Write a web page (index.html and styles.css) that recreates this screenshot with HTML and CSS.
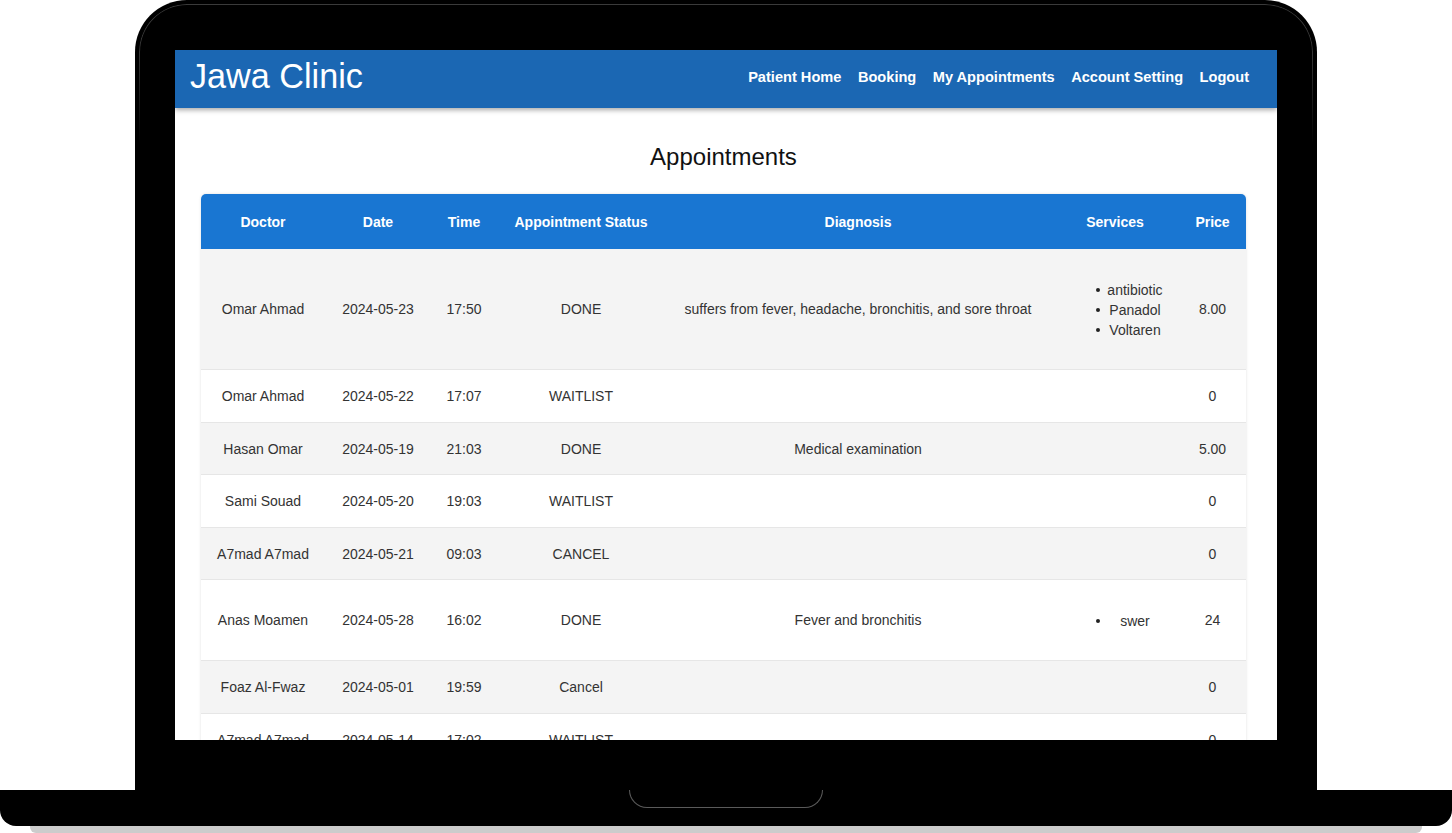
FILE: index.html
```html
<!DOCTYPE html>
<html lang="en">
<head>
<meta charset="utf-8">
<title>Jawa Clinic - My Appointments</title>
<link rel="stylesheet" href="styles.css">
</head>
<body>
<div class="device">
  <div class="lid">
    <div class="screen">
      <header class="navbar">
        <div class="brand">Jawa Clinic</div>
        <nav class="nav-links">
          <a href="#">Patient Home</a>
          <a href="#">Booking</a>
          <a href="#">My Appointments</a>
          <a href="#">Account Setting</a>
          <a href="#">Logout</a>
        </nav>
      </header>
      <main class="content">
        <h2 class="page-title">Appointments</h2>
        <div class="table-card">
          <table class="appt-table">
            <colgroup>
              <col class="c-doctor"><col class="c-date"><col class="c-time"><col class="c-status"><col class="c-diag"><col class="c-serv"><col class="c-price">
            </colgroup>
            <thead>
              <tr><th>Doctor</th><th>Date</th><th>Time</th><th>Appointment Status</th><th>Diagnosis</th><th>Services</th><th>Price</th></tr>
            </thead>
            <tbody>
              <tr><td>Omar Ahmad</td><td>2024-05-23</td><td>17:50</td><td>DONE</td><td>suffers from fever, headache, bronchitis, and sore throat</td><td><ul class="services"><li>antibiotic</li><li>Panadol</li><li>Voltaren</li></ul></td><td>8.00</td></tr>
              <tr><td>Omar Ahmad</td><td>2024-05-22</td><td>17:07</td><td>WAITLIST</td><td></td><td></td><td>0</td></tr>
              <tr><td>Hasan Omar</td><td>2024-05-19</td><td>21:03</td><td>DONE</td><td>Medical examination</td><td></td><td>5.00</td></tr>
              <tr><td>Sami Souad</td><td>2024-05-20</td><td>19:03</td><td>WAITLIST</td><td></td><td></td><td>0</td></tr>
              <tr><td>A7mad A7mad</td><td>2024-05-21</td><td>09:03</td><td>CANCEL</td><td></td><td></td><td>0</td></tr>
              <tr><td>Anas Moamen</td><td>2024-05-28</td><td>16:02</td><td>DONE</td><td>Fever and bronchitis</td><td><ul class="services"><li>swer</li></ul></td><td>24</td></tr>
              <tr><td>Foaz Al-Fwaz</td><td>2024-05-01</td><td>19:59</td><td>Cancel</td><td></td><td></td><td>0</td></tr>
              <tr><td>A7mad A7mad</td><td>2024-05-14</td><td>17:02</td><td>WAITLIST</td><td></td><td></td><td>0</td></tr>
              <tr><td>Sami Souad</td><td>2024-05-12</td><td>11:30</td><td>DONE</td><td></td><td></td><td>0</td></tr>
            </tbody>
          </table>
        </div>
      </main>
    </div>
  </div>
  <div class="base">
    <div class="notch"></div>
  </div>
  <div class="foot"></div>
</div>
</body>
</html>
```

FILE: styles.css
```css
* { box-sizing: border-box; }

html, body {
  margin: 0;
  padding: 0;
  background: #ffffff;
  font-family: "Liberation Sans", Arial, sans-serif;
}

body {
  width: 1452px;
  height: 833px;
  overflow: hidden;
}

.device {
  display: flex;
  flex-direction: column;
  align-items: center;
}

.lid {
  position: relative;
  width: 1182px;
  height: 790px;
  padding: 50px 40px;
  background: #000;
  border-radius: 52px 52px 0 0;
}

.lid::before {
  content: "";
  position: absolute;
  top: 4px;
  left: 4px;
  right: 4px;
  height: 140px;
  border: 1px solid #3a3a3a;
  border-bottom: none;
  border-radius: 48px 48px 0 0;
  -webkit-mask-image: linear-gradient(#000 30%, transparent);
  mask-image: linear-gradient(#000 30%, transparent);
  pointer-events: none;
}

.screen {
  position: relative;
  width: 1102px;
  height: 690px;
  background: #fff;
  overflow: hidden;
}

.base {
  position: relative;
  width: 1452px;
  height: 36px;
  background: #000;
  border-radius: 0 0 16px 16px;
}

.notch {
  position: absolute;
  left: 629px;
  top: 0;
  width: 194px;
  height: 18px;
  border: 1px solid #5a5a5a;
  border-top: none;
  border-radius: 0 0 18px 18px;
}

.foot {
  width: 1392px;
  height: 7px;
  background: #cccccc;
  border-radius: 0 0 6px 6px;
}

/* navbar */
.navbar {
  height: 58px;
  background: #1b67b3;
  display: flex;
  align-items: center;
  justify-content: space-between;
  padding: 0 28px 6px 15px;
  box-shadow: 0 2px 5px rgba(0, 0, 0, 0.35);
  position: relative;
}

.brand {
  color: #fff;
  font-size: 34.2px;
  line-height: 40px;
}

.nav-links {
  display: flex;
  gap: 16.5px;
  padding-top: 2px;
}

.nav-links a {
  color: #fff;
  text-decoration: none;
  font-weight: bold;
  font-size: 14.6px;
  line-height: 18px;
}

/* content */
.content {
  padding: 35px 31px 0 26px;
}

.page-title {
  margin: 0 0 23px;
  text-align: center;
  font-weight: normal;
  font-size: 24px;
  line-height: 28px;
  color: #111;
}

.table-card {
  border-radius: 5px 5px 0 0;
  overflow: hidden;
  box-shadow: 0 0 3px rgba(0, 0, 0, 0.12);
}

.appt-table {
  width: 1045px;
  border-collapse: collapse;
  table-layout: fixed;
  font-size: 14px;
}

.c-doctor { width: 124px; }
.c-date { width: 106px; }
.c-time { width: 66px; }
.c-status { width: 168px; }
.c-diag { width: 386px; }
.c-serv { width: 128px; }
.c-price { width: 67px; }

.appt-table th {
  background: #1976d2;
  color: #fff;
  font-weight: bold;
  padding: 17.5px 6px;
  line-height: 20px;
  text-align: center;
  white-space: nowrap;
}

.appt-table td {
  padding: 16px 6px 15.5px;
  line-height: 20px;
  text-align: center;
  color: #333;
  white-space: nowrap;
  border-bottom: 1px solid #e6e6e6;
}

.appt-table tbody tr:nth-child(odd) td {
  background: #f4f4f4;
}

.appt-table tbody tr:nth-child(even) td {
  background: #fff;
}

.services {
  margin: 14.5px 9px 14px 9px;
  padding-left: 40px;
  text-align: center;
  list-style: none;
}

.services li {
  position: relative;
  line-height: 20px;
}

.services li::before {
  content: "";
  position: absolute;
  left: -10px;
  top: 8px;
  width: 4px;
  height: 4px;
  border-radius: 50%;
  background: #222;
}
```
